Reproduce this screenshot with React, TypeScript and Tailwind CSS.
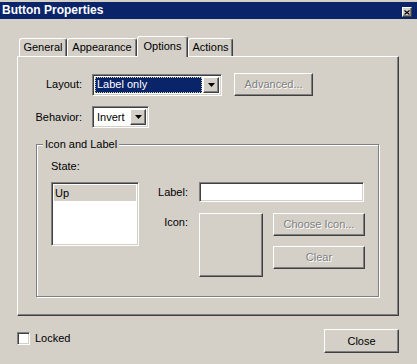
const raised =
  "border border-t-white border-l-white border-r-[#404040] border-b-[#404040] shadow-[inset_-1px_-1px_0_#808080]";
const sunken =
  "border border-t-[#808080] border-l-[#808080] border-r-white border-b-white shadow-[inset_1px_1px_0_#404040,inset_-1px_-1px_0_#d4d0c8]";
const disabledText = "text-[#808080] [text-shadow:1px_1px_0_#ffffff]";

function DownArrow() {
  return (
    <svg width="7" height="4" viewBox="0 0 7 4">
      <path d="M0 0h7L3.5 4z" fill="#000" />
    </svg>
  );
}

function DropButton() {
  return (
    <div className={`flex w-[16px] items-center justify-center bg-[#d4d0c8] ${raised}`}>
      <DownArrow />
    </div>
  );
}

function Tab({ label, width, selected }: { label: string; width: string; selected?: boolean }) {
  if (selected) {
    return (
      <div
        className={`relative z-10 -mb-px flex h-[21px] items-start justify-center rounded-t-[3px] border-l border-t border-r border-l-white border-t-white border-r-[#404040] bg-[#d4d0c8] pt-[3px] shadow-[inset_-1px_0_0_#808080] ${width}`}
      >
        {label}
      </div>
    );
  }
  return (
    <div
      className={`flex h-[18px] items-center justify-center rounded-t-[3px] border-l border-t border-r border-l-white border-t-white border-r-[#404040] shadow-[inset_-1px_0_0_#808080] ${width}`}
    >
      {label}
    </div>
  );
}

function Button({ label, className, disabled }: { label: string; className: string; disabled?: boolean }) {
  return (
    <div
      className={`flex items-center justify-center bg-[#d4d0c8] ${raised} ${disabled ? disabledText : "text-black"} ${className}`}
    >
      {label}
    </div>
  );
}

export default function App() {
  return (
    <div className="h-[364px] w-[417px] overflow-hidden bg-[#d4d0c8] pt-[2px] font-['Liberation_Sans',Arial,sans-serif] text-[11px] leading-[13px] text-black">
      {/* title bar */}
      <div className="flex h-[17px] items-center justify-between bg-[#0a246a] pl-[2px] pr-[5px]">
        <span className="text-[12px] font-bold text-white">Button Properties</span>
        <div className={`mt-[3px] flex h-[10px] w-[10px] items-center justify-center bg-[#d4d0c8] ${raised}`}>
          <svg width="6" height="5" viewBox="0 0 6 5">
            <path d="M0.5 0.5L5.5 4.5M5.5 0.5L0.5 4.5" stroke="#000" strokeWidth="1.2" />
          </svg>
        </div>
      </div>

      <div className="px-[17px] pt-[17px]">
        {/* tabs */}
        <div className="flex h-[20px] items-end pl-[2px]">
          <Tab label="General" width="w-[48px]" />
          <Tab label="Appearance" width="w-[70px]" />
          <Tab label="Options" width="w-[51px]" selected />
          <Tab label="Actions" width="w-[45px]" />
        </div>

        {/* tab panel */}
        <div className="flex h-[260px] w-[382px] flex-col border border-t-white border-l-white border-r-[#404040] border-b-[#404040] shadow-[inset_-1px_-1px_0_#808080] pt-[16px]">
          <div className="grid grid-cols-[64px_auto] items-center gap-x-[10px] gap-y-[10px]">
            <span className="text-right">Layout:</span>
            <div className="flex h-[23px] items-center">
              <div className={`flex h-[22px] w-[130px] bg-white p-[2px] ${sunken}`}>
                <div className="mr-px flex flex-1 items-center border border-dotted border-[#c8c8a0] bg-[#0a246a] pl-[1px] text-white">
                  Label only
                </div>
                <DropButton />
              </div>
              <Button label="Advanced..." className="ml-[12px] h-[23px] w-[79px]" disabled />
            </div>

            <span className="text-right">Behavior:</span>
            <div className={`flex h-[22px] w-[57px] bg-white p-[2px] ${sunken}`}>
              <div className="flex flex-1 items-center pl-[2px]">Invert</div>
              <DropButton />
            </div>
          </div>

          {/* group box */}
          <div className="relative ml-[18px] mt-[16px] h-[153px] w-[343px] border border-[#808080] shadow-[inset_1px_1px_0_#ffffff,1px_1px_0_#ffffff] pl-[14px] pt-[15px]">
            <span className="absolute left-[6px] top-[-7px] bg-[#d4d0c8] px-[2px]">Icon and Label</span>
            <div>State:</div>
            <div className="mt-[9px] flex">
              <div className={`h-[64px] w-[88px] bg-white p-[2px] ${sunken}`}>
                <div className="flex h-[16px] items-center bg-[#d4d0c8] pl-[1px]">Up</div>
              </div>
              <div className="ml-[19px] grid grid-cols-[30px_auto] gap-x-[11px] gap-y-[11px]">
                <span className="self-center text-right">Label:</span>
                <div className={`h-[20px] w-[165px] bg-white ${sunken}`} />

                <span className="pt-[3px] text-right">Icon:</span>
                <div className="flex">
                  <div className={`h-[64px] w-[64px] bg-[#d4d0c8] ${raised}`} />
                  <div className="ml-[10px] flex flex-col gap-[10px]">
                    <Button label="Choose Icon..." className="h-[23px] w-[92px]" disabled />
                    <Button label="Clear" className="h-[23px] w-[92px]" disabled />
                  </div>
                </div>
              </div>
            </div>
          </div>
        </div>

        {/* bottom row */}
        <div className="mt-[13px] flex w-[382px] items-start justify-between">
          <div className="mt-[3px] flex items-center gap-[5px]">
            <div className={`h-[13px] w-[13px] bg-white ${sunken}`} />
            <span>Locked</span>
          </div>
          <Button label="Close" className="h-[24px] w-[75px]" />
        </div>
      </div>
    </div>
  );
}
